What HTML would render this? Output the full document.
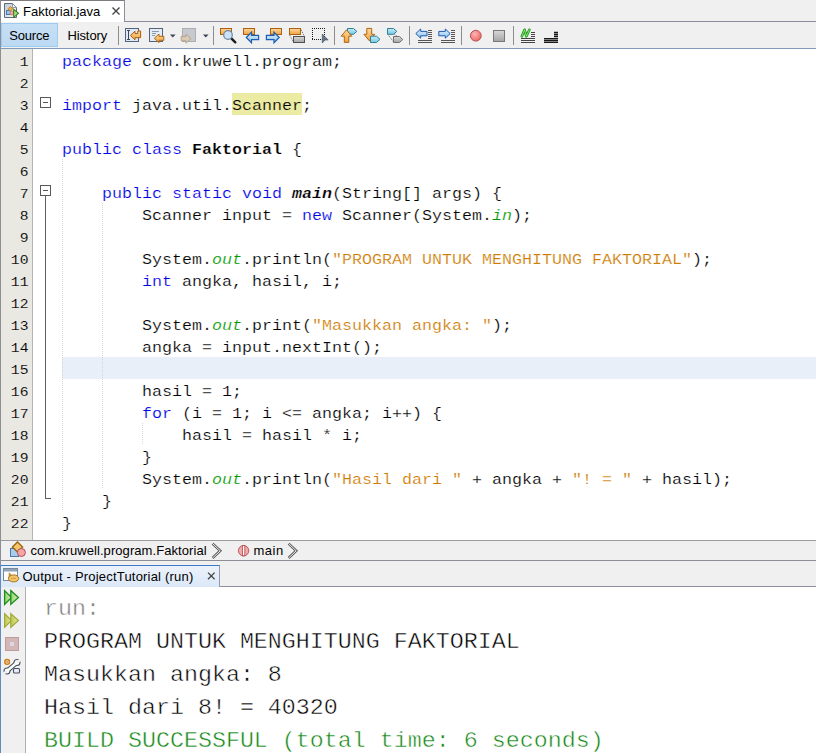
<!DOCTYPE html>
<html><head><meta charset="utf-8">
<style>
*{box-sizing:border-box;margin:0;padding:0}
html,body{width:816px;height:753px;overflow:hidden;background:#f0f0f0}
body{position:relative;font-family:"Liberation Sans",sans-serif;font-size:12px;color:#000}
.abs{position:absolute}
.ui{font-family:"Liberation Sans",sans-serif;font-size:13px;color:#000;white-space:pre}
/* top tab row */
#tabrow{left:0;top:0;width:816px;height:22px;background:#f0f0f0}
#tab{left:0;top:0;width:125px;height:22px;background:#fff;border-top:1px solid #7c7c80;border-left:1px solid #8e8e96;border-right:1px solid #8e9099}
#tabline{left:125px;top:21px;width:691px;height:1px;background:#8d8b9b}
/* toolbar */
#toolbar{left:0;top:22px;width:816px;height:27px;background:#f0f0f0;border-bottom:1px solid #7f9dbb}
#srcbtn{left:1px;top:23px;width:57px;height:24px;background:linear-gradient(#c6dff5,#bcd9f2);border:1px solid #9ccbf3}
/* editor */
#editor{left:0;top:49px;width:816px;height:491px;background:#fff}
#gutter{left:0;top:49px;width:33px;height:491px;background:#e9e8e2;border-right:1px solid #b4b4b4;border-left:1px solid #9c9c9c}
#curline{left:62px;top:357px;width:754px;height:22px;background:#e9eff8}
pre{font-family:"Liberation Mono",monospace}
#nums{left:0;top:52px;width:28.5px;text-align:right;font-size:13.6px;line-height:22px;color:#000;transform:scaleX(1.08);transform-origin:100% 0;-webkit-text-stroke:.1px #e9e8e2}
#code{left:62px;top:51px;font-size:14.33px;line-height:22px;color:#000;transform:scaleX(1.163);transform-origin:0 0;-webkit-text-stroke:.18px #fff}
.k{color:#0000e6}.s{color:#ce7b00}.f{color:#009900;font-style:italic}.b{font-weight:bold}.bi{font-weight:bold;font-style:italic}

.fold{width:11px;height:11px;border:1px solid #585858;background:#fff}
.fold i{position:absolute;left:2px;top:4px;width:5px;height:1px;background:#585858}
.vl{width:1px;background:#5e5e5e}
.guide{width:1px;background-image:linear-gradient(#d6d6d6 50%,transparent 50%);background-size:1px 2px}
/* breadcrumb */
#crumb{left:0;top:540px;width:816px;height:21px;background:#f0f0f0;border-top:1px solid #9c9ca0;border-bottom:1px solid #8e8e96}
/* output */
#otab{left:0;top:565px;width:220px;height:22px;background:linear-gradient(#ecf2fb,#dce8f8);border-top:1px solid #3d7bc4;border-right:1px solid #8e9bb0}
#oline{left:220px;top:586px;width:596px;height:1px;background:#8e8e9c}
#oarea{left:0;top:587px;width:816px;height:166px;background:#fff}
#oside{left:0;top:587px;width:26px;height:166px;background:#f0f0f0;border-right:1px solid #b0b0b0}
#out{left:44px;top:593px;font-size:21.2px;line-height:33px;color:#000;transform:scaleX(1.1004);transform-origin:0 0;-webkit-text-stroke:.45px #fff}
.g{color:#7c7c7c}.ok{color:#128712}
</style></head><body>
<div id="tabrow" class="abs"></div>
<div id="tab" class="abs"></div>
<div id="tabline" class="abs"></div>
<div id="toolbar" class="abs"></div>
<div id="srcbtn" class="abs"></div>
<div class="abs ui" style="left:23px;top:4px">Faktorial.java</div>
<div class="abs ui" style="left:9.3px;top:28px;letter-spacing:-.2px">Source</div>
<div class="abs ui" style="left:67.4px;top:28px;letter-spacing:-.1px">History</div>
<div id="editor" class="abs"></div>
<div id="gutter" class="abs"></div>
<div id="curline" class="abs"></div>
<div class="abs" style="left:232px;top:93px;width:70px;height:22px;background:#eceba3"></div>
<div class="abs fold" style="left:40px;top:97px"><i></i></div>
<div class="abs fold" style="left:40px;top:185px"><i></i></div>
<div class="abs vl" style="left:45px;top:196px;height:303px"></div>
<div class="abs" style="left:45px;top:498px;width:6px;height:1px;background:#5e5e5e"></div>
<div class="abs guide" style="left:62px;top:159px;height:351px"></div>
<div class="abs guide" style="left:102px;top:203px;height:285px"></div>
<div class="abs guide" style="left:142px;top:423px;height:22px"></div>
<pre id="nums" class="abs">1
2
3
4
5
6
7
8
9
10
11
12
13
14
15
16
17
18
19
20
21
22</pre>
<pre id="code" class="abs"><span class="k">package</span> com.kruwell.program;

<span class="k">import</span> java.util.<span style="-webkit-text-stroke-color:#eceba3">Scanner</span>;

<span class="k">public</span> <span class="k">class</span> <span class="b">Faktorial</span> {

    <span class="k">public</span> <span class="k">static</span> <span class="k">void</span> <span class="bi">main</span>(String[] args) {
        Scanner input = <span class="k">new</span> Scanner(System.<span class="f">in</span>);

        System.<span class="f">out</span>.println(<span class="s">"PROGRAM UNTUK MENGHITUNG FAKTORIAL"</span>);
        <span class="k">int</span> angka, hasil, i;

        System.<span class="f">out</span>.print(<span class="s">"Masukkan angka: "</span>);
        angka = input.nextInt();

        hasil = 1;
        <span class="k">for</span> (i = 1; i &lt;= angka; i++) {
            hasil = hasil * i;
        }
        System.<span class="f">out</span>.println(<span class="s">"Hasil dari "</span> + angka + <span class="s">"! = "</span> + hasil);
    }
}</pre>
<div id="crumb" class="abs"></div>
<div class="abs" style="left:0;top:22px;width:1px;height:543px;background:#8e8e96"></div>
<div class="abs ui" style="left:30.5px;top:543px;letter-spacing:.07px">com.kruwell.program.Faktorial</div>
<div class="abs ui" style="left:253.5px;top:543px;letter-spacing:.5px">main</div>
<div id="otab" class="abs"></div>
<div id="oline" class="abs"></div>
<div class="abs ui" style="left:22.5px;top:569px;letter-spacing:.2px">Output - ProjectTutorial (run)</div>
<div id="oarea" class="abs"></div>
<div id="oside" class="abs"></div>
<div class="abs" style="left:0;top:565px;width:1px;height:188px;background:#5f8ac2"></div>
<pre id="out" class="abs"><span class="g">run:</span>
PROGRAM UNTUK MENGHITUNG FAKTORIAL
Masukkan angka: 8
Hasil dari 8! = 40320
<span class="ok">BUILD SUCCESSFUL (total time: 6 seconds)</span></pre>
<svg class="abs" style="left:0;top:0;pointer-events:none" width="816" height="753" viewBox="0 0 816 753">
<defs>
<linearGradient id="gO" x1="0" y1="0" x2="0" y2="1"><stop offset="0" stop-color="#fcd9a2"/><stop offset="1" stop-color="#f0a13c"/></linearGradient>
<linearGradient id="gB" x1="0" y1="0" x2="0" y2="1"><stop offset="0" stop-color="#e2f1fd"/><stop offset="1" stop-color="#8cc2f0"/></linearGradient>
<linearGradient id="gC" x1="0" y1="0" x2="0" y2="1"><stop offset="0" stop-color="#c4ecf6"/><stop offset="1" stop-color="#74c8e2"/></linearGradient>
<linearGradient id="gG" x1="0" y1="0" x2="0" y2="1"><stop offset="0" stop-color="#d8d8d8"/><stop offset="1" stop-color="#a4a4a4"/></linearGradient>
<linearGradient id="gP" x1="0" y1="0" x2="1" y2="1"><stop offset="0" stop-color="#bcc6d4"/><stop offset="1" stop-color="#ffffff"/></linearGradient>
<radialGradient id="gR" cx="0.4" cy="0.35" r="0.7"><stop offset="0" stop-color="#fdb4b4"/><stop offset="1" stop-color="#ec6464"/></radialGradient>
<linearGradient id="gGr" x1="0" y1="0" x2="1" y2="0"><stop offset="0" stop-color="#94d66e"/><stop offset="1" stop-color="#ccefb4"/></linearGradient>
<linearGradient id="gY" x1="0" y1="0" x2="1" y2="0"><stop offset="0" stop-color="#bcc850"/><stop offset="1" stop-color="#e4e898"/></linearGradient>
</defs>
<!-- tab file icon -->
<g stroke-width="1">
<path d="M4.5 3.5H12.5L16.5 7.5V17.5H4.5Z" fill="url(#gP)" stroke="#5f6a7a"/>
<path d="M12.5 3.5V7.5H16.5Z" fill="#f2f5fa" stroke="#7a8494" stroke-width=".8"/>
<rect x="6.5" y="10.5" width="4" height="4" fill="#9cc4ea" stroke="#4a78a8"/>
<path d="M10.4 6.4L12.8 8.8L10.4 11.2L8 8.8Z" fill="#f0b040" stroke="#b07820" stroke-width=".8"/>
<circle cx="12" cy="13" r="2.1" fill="#f4a0a0" stroke="#c87878" stroke-width=".8"/>
<path d="M13.7 9.3L18.5 13.3L13.7 17.3Z" fill="#a4e080" stroke="#3a7c1a" stroke-width="1.1"/>
</g>
<!-- close x tab -->
<path d="M112.5 7.5L119.5 14.5M119.5 7.5L112.5 14.5" stroke="#444" stroke-width="1.4" fill="none"/>
<!-- separators -->
<g fill="#8c8c8c"><rect x="118" y="26" width="1" height="19"/><rect x="213" y="26" width="1" height="19"/><rect x="334" y="26" width="1" height="19"/><rect x="409" y="26" width="1" height="19"/><rect x="461" y="26" width="1" height="19"/><rect x="513" y="26" width="1" height="19"/></g>
<!-- icon1 last edit -->
<rect x="125.5" y="28.5" width="13" height="13" fill="#e0eaf6" stroke="#56627a"/>
<path d="M127 30.5H130M127 39.5H130M128.5 30.5V39.5" stroke="#3c4658" fill="none"/>
<path d="M130.5 35.5L135 31.2V33.5H137.8V31H140.6V37.7H135V39.8Z" fill="url(#gO)" stroke="#a85e0c"/>
<!-- icon2 -->
<rect x="149.5" y="28.5" width="13" height="13" fill="#e4ecf6" stroke="#56627a"/>
<path d="M152 31.5H159M152 33.5H156M152 35.5H155" stroke="#8a9ab0" fill="none"/>
<path d="M154.3 38.3L159 34V36.3H163.8V40.3H159V42.6Z" fill="url(#gO)" stroke="#b0660f"/>
<path d="M170 34.5H175.6L172.8 37.6Z" fill="#3a4656"/>
<!-- icon3 disabled -->
<rect x="182.5" y="28.5" width="13" height="13" fill="#c6cace" stroke="#aaaeb2"/>
<path d="M191 38.6L186 34V36.4H181.2V40.8H186V43.2Z" fill="#dacab6" stroke="#b4a48c"/>
<path d="M203 34.5H208.6L205.8 37.6Z" fill="#3a4656"/>
<!-- icon5 find selection -->
<rect x="220.5" y="28.5" width="11" height="6" fill="url(#gO)" stroke="#b0600c"/>
<path d="M231.3 38.3L235.3 42.3" stroke="#1c1c1c" stroke-width="2.4" stroke-linecap="round"/>
<circle cx="228" cy="35" r="4.3" fill="#cbe2f7" stroke="#6a88a8" stroke-width="1.2"/>
<!-- icon6 find prev -->
<rect x="243.5" y="28.5" width="11" height="6" fill="url(#gO)" stroke="#b0600c"/>
<path d="M246.3 37.5L251.5 32.3V35.3H258.6V39.7H251.5V42.7Z" fill="url(#gB)" stroke="#1c5cae" stroke-width="1.2"/>
<!-- icon7 find next -->
<rect x="270.5" y="28.5" width="11" height="6" fill="url(#gO)" stroke="#b0600c"/>
<path d="M279.2 37.5L274 32.3V35.3H266.4V39.7H274V42.7Z" fill="url(#gB)" stroke="#1c5cae" stroke-width="1.2"/>
<!-- icon8 toggle highlight -->
<path d="M289.5 35L293.5 42M300.5 28.5L304.5 36.5" stroke="#666" stroke-dasharray="1 1" fill="none"/>
<rect x="289.5" y="28.5" width="11" height="6" fill="url(#gO)" stroke="#b0600c"/>
<rect x="293.5" y="36.5" width="11" height="6" fill="url(#gG)" stroke="#505050"/>
<!-- icon9 rect select -->
<path d="M312 28.5H325M312 39.5H325M312.5 28V40M324.5 28V40" fill="none" stroke="#1a1a1a" stroke-dasharray="1 1"/>
<path d="M322.3 34L328.2 40H325L322.3 43Z" fill="#667686" stroke="#3e4a58" stroke-width=".6"/>
<!-- icon11 prev bookmark -->
<path d="M347.5 28.5H353.5L356.8 31.4L353.5 34.3H347.5Z" fill="url(#gC)" stroke="#2f7f97"/>
<path d="M346.5 29.8L351.7 36.2H348.8V42.4H344.3V36.2H341.2Z" fill="url(#gO)" stroke="#b0660f"/>
<!-- icon12 next bookmark -->
<path d="M366.8 28.4H371.7V34.3H374.7L369.3 40.8L363.9 34.3H366.8Z" fill="url(#gO)" stroke="#b0660f"/>
<path d="M370.5 36.2H376.5L380 39.3L376.5 42.5H370.5Z" fill="url(#gC)" stroke="#2f7f97"/>
<!-- icon13 toggle bookmark -->
<path d="M388 34.5L393.5 42M394.5 34.5L397.5 36.5" stroke="#666" stroke-dasharray="1 1" fill="none"/>
<path d="M387.5 28.5H393.5L396.8 31.4L393.5 34.3H387.5Z" fill="url(#gC)" stroke="#2f7f97"/>
<path d="M393.5 36.5H399.5L402.8 39.5L399.5 42.5H393.5Z" fill="url(#gG)" stroke="#707070"/>
<!-- icon15 shift left -->
<path d="M428 30.5H432M428 32.5H432M428 34.5H432M428 36.5H432M428 38.5H432M418 40.5H432M418 42.5H432" stroke="#555" fill="none"/>
<path d="M415.8 33.6L420.7 29V31.4H427V35.8H420.7V38.2Z" fill="url(#gB)" stroke="#1c5cae"/>
<!-- icon16 shift right -->
<path d="M451 30.5H455M451 32.5H455M451 34.5H455M451 36.5H455M451 38.5H455M441 40.5H455M441 42.5H455" stroke="#555" fill="none"/>
<path d="M450.2 33.6L445.3 29V31.4H438.8V35.8H445.3V38.2Z" fill="url(#gB)" stroke="#1c5cae"/>
<!-- icon18 red circle -->
<circle cx="475.8" cy="35.7" r="5.4" fill="url(#gR)" stroke="#b85050"/>
<!-- icon19 gray square -->
<rect x="493.5" y="30.5" width="11" height="11" fill="url(#gG)" stroke="#787878"/>
<!-- icon21 comment -->
<path d="M531 32.5H535M531 34.5H535M531 36.5H535M521 38.5H535M521 40.5H535M521 42.5H535" stroke="#444" fill="none"/>
<path d="M521.8 36.3L524.6 29.8L526.4 36.3L529.4 29.8" stroke="#1c9c1c" stroke-width="2.6" fill="none" stroke-linecap="round" stroke-linejoin="round"/>
<path d="M521.8 36.3L524.6 29.8L526.4 36.3L529.4 29.8" stroke="#a8f088" stroke-width=".8" fill="none" stroke-linecap="round" stroke-linejoin="round"/>
<!-- icon22 uncomment -->
<path d="M554 32.5H558M554 34.5H558M554 36.5H558M544 38.6H558M544 40.5H558M544 42.4H558" stroke="#181818" stroke-width="1.3" fill="none"/>
<!-- breadcrumb class icon -->
<rect x="10.5" y="548.5" width="8" height="8" fill="#a8cced" stroke="#4a78a8"/>
<path d="M17.5 542L22.6 547L17.5 552L12.4 547Z" fill="#f2c46e" stroke="#9a640c" stroke-width="1.3"/>
<circle cx="21.4" cy="552.5" r="4" fill="#f8a4a4" stroke="#a85454"/>
<!-- chevrons -->
<g fill="none" stroke-linejoin="miter"><path d="M212.6 543.6L220.2 550.8L212.6 558" stroke="#5a5a5a" stroke-width="2.6"/><path d="M212.6 543.6L220.2 550.8L212.6 558" stroke="#fff" stroke-width=".9"/>
<path d="M288.6 543.6L296.2 550.8L288.6 558" stroke="#5a5a5a" stroke-width="2.6"/><path d="M288.6 543.6L296.2 550.8L288.6 558" stroke="#fff" stroke-width=".9"/></g>
<!-- main icon -->
<circle cx="243.6" cy="550.7" r="5.2" fill="#f4a8a8" stroke="#b85858"/>
<rect x="242.4" y="545.6" width="2.4" height="10.2" fill="#fff" stroke="#b04848" stroke-width=".8"/>
<!-- output tab icon -->
<rect x="3.5" y="568.5" width="14" height="12" fill="#fff" stroke="#7a8898"/>
<rect x="4" y="569" width="13" height="2.5" fill="#8ea4bc"/>
<path d="M9.3 572.8L12 576.2L9 577.6Z" fill="#f2c46c" stroke="#a87018" stroke-width=".8"/>
<ellipse cx="13.6" cy="578.4" rx="5.2" ry="3.5" fill="#f2c46c" stroke="#a87018"/>
<path d="M11 578.4H16" stroke="#c89030" stroke-width=".8"/>
<!-- output close -->
<path d="M208 572.6L214.6 579.2M214.6 572.6L208 579.2" stroke="#444" stroke-width="1.3" fill="none"/>
<!-- side icons -->
<path d="M4.6 590.6L11.5 597.5L4.6 604.4Z" fill="url(#gGr)" stroke="#1c8a1c" stroke-width="1.3"/>
<path d="M10.8 590.6L18.4 597.5L10.8 604.4Z" fill="url(#gGr)" stroke="#1c8a1c" stroke-width="1.3"/>
<path d="M4.6 613.6L11.5 620.5L4.6 627.4Z" fill="url(#gY)" stroke="#a0a838" stroke-width="1.2"/>
<path d="M10.8 613.6L18.4 620.5L10.8 627.4Z" fill="url(#gY)" stroke="#a0a838" stroke-width="1.2"/>
<rect x="5.5" y="637.5" width="13" height="13" fill="#d4b6b6" stroke="#bc9c9c"/>
<rect x="10" y="642" width="4" height="4" fill="#dcd8e2"/>
<!-- wrench -->
<g fill="none">
<path d="M7 671L17 662.5" stroke="#46525f" stroke-width="4.6"/>
<circle cx="7" cy="671" r="3.5" fill="#46525f"/>
<circle cx="17" cy="662.5" r="3.5" fill="#46525f"/>
<path d="M7 671L17 662.5" stroke="#fff" stroke-width="2.4"/>
<circle cx="7" cy="671" r="2.4" fill="#fff"/>
<circle cx="17" cy="662.5" r="2.4" fill="#fff"/>
<path d="M17 662.5L20.8 659.3" stroke="#f0f0f0" stroke-width="2.3"/>
<path d="M7 671L3.2 674.2" stroke="#f0f0f0" stroke-width="2.3"/>
<rect x="13.5" y="668.5" width="6" height="4.5" rx="1" fill="#e8eef8" stroke="#46525f" stroke-width="1.1"/>
<circle cx="7.1" cy="661.9" r="2.3" fill="#fff" stroke="#cc7a10" stroke-width="1.5"/>
<circle cx="7.1" cy="661.9" r=".9" fill="#cc7a10"/>
</g>
</svg>
</body></html>
